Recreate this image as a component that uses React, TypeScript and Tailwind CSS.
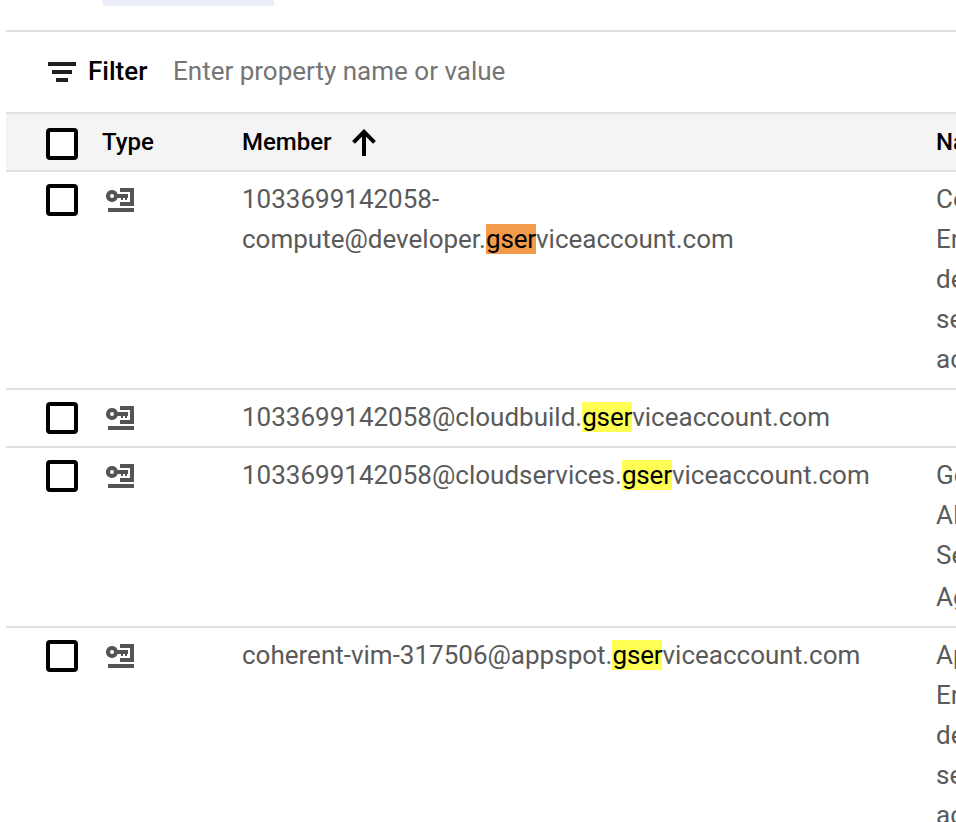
import React from "react";

function Checkbox({ className = "" }: { className?: string }) {
  return <div className={`h-8 w-8 shrink-0 rounded-[4px] border-4 border-black bg-white ${className}`} />;
}

function ServiceAccountIcon() {
  return (
    <svg width="28" height="24" viewBox="0 0 28 24" fill="#545454" className="mt-[9px] shrink-0">
      <path
        fillRule="evenodd"
        d="M6 2a6 6 0 0 1 5.6 4H22v4h-1v2h-2v-2h-2v2h-2v-2h-3.4A6 6 0 1 1 6 2ZM6 6a2 2 0 1 0 0 4a2 2 0 0 0 0-4Z"
      />
      <path d="M14 0h14v18H14v-4h10V4H14ZM2 20h26v4H2Z" />
    </svg>
  );
}

type RowData = {
  before: React.ReactNode;
  mark: string;
  name: string[];
  height: string;
};

const rows: RowData[] = [
  {
    before: (
      <>
        1033699142058-
        <br />
        compute@developer.
      </>
    ),
    mark: "bg-[#f29b4b]",
    name: ["Compute", "Engine", "default", "service", "account"],
    height: "h-[218px]",
  },
  { before: "1033699142058@cloudbuild.", mark: "bg-[#ffff54]", name: [], height: "h-[58px]" },
  {
    before: "1033699142058@cloudservices.",
    mark: "bg-[#ffff54]",
    name: ["Google", "APIs", "Service", "Agent"],
    height: "h-[180px]",
  },
  {
    before: "coherent-vim-317506@appspot.",
    mark: "bg-[#ffff54]",
    name: ["App", "Engine", "default", "service", "account"],
    height: "h-[218px]",
  },
];

export default function App() {
  return (
    <div className="h-[822px] w-[956px] overflow-hidden bg-white pl-1.5 font-['Roboto',sans-serif]">
      <div className="h-[30px]">
        <div className="ml-24 h-1.5 w-[172px] rounded-bl-[4px] bg-[#ebedf9]" />
      </div>
      <div className="flex h-[82px] items-center border-t-2 border-[#e0e0e0] pl-[42px]">
        <svg width="28" height="20" viewBox="0 0 28 20" fill="#202020" className="shrink-0">
          <path d="M0 0h28v4H0ZM4 8h20v4H4ZM8 16h12v4H8Z" />
        </svg>
        <span className="ml-3 w-[85px] pb-0.5 text-[26px] font-medium text-black">Filter</span>
        <span className="pb-0.5 text-[26px] text-[#757575]">Enter property name or value</span>
      </div>
      <div className="flex h-[60px] border-y-2 border-[#e0e0e0] bg-[#f4f4f4] pl-10 text-[24px] leading-[56px] font-medium text-black">
        <Checkbox className="mt-3.5" />
        <span className="ml-6 w-[140px] shrink-0">Type</span>
        <div className="flex w-[694px] shrink-0">
          <span className="w-[110px]">Member</span>
          <svg width="24" height="28" viewBox="0 0 24 28" fill="none" stroke="#000" strokeWidth="4" className="mt-[15px]">
            <path d="M12 27V3M1.5 13.3L12 2.8L22.5 13.3" />
          </svg>
        </div>
        <span>Name</span>
      </div>
      {rows.map((row, i) => (
        <div
          key={i}
          className={`flex border-b-2 border-[#e0e0e0] pt-[7px] pl-10 text-[26px] leading-10 text-[#5a5a5a] ${row.height}`}
        >
          <Checkbox className="mt-[5px]" />
          <div className="ml-7 w-[136px] shrink-0">
            <ServiceAccountIcon />
          </div>
          <div className="w-[694px] shrink-0 whitespace-nowrap">
            {row.before}
            <span className={`tracking-[-0.15px] text-black ${row.mark}`}>gser</span>viceaccount.com
          </div>
          <div>
            {row.name.map((line, n) => (
              <div key={n} className={n === 3 && row.name.length === 4 ? "pt-0.5" : ""}>
                {line}
              </div>
            ))}
          </div>
        </div>
      ))}
    </div>
  );
}
